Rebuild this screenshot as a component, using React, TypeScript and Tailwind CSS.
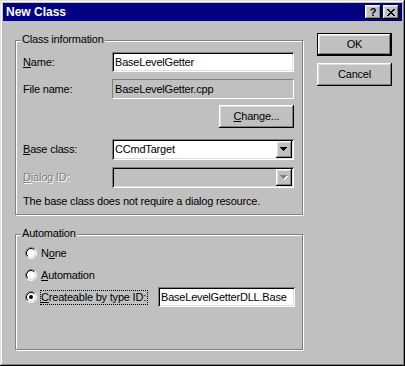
import React from "react";

const raised =
  "shadow-[inset_-1px_-1px_0_#000,inset_1px_1px_0_#fff,inset_-2px_-2px_0_#808080,inset_2px_2px_0_#dfdfdf]";
const sunken =
  "shadow-[inset_1px_1px_0_#808080,inset_-1px_-1px_0_#fff,inset_2px_2px_0_#000,inset_-2px_-2px_0_#dfdfdf]";

const U = ({ children }: { children: React.ReactNode }) => (
  <span className="underline decoration-1 underline-offset-[1px]">{children}</span>
);

const CloseGlyph = () => {
  const rows = ["XX....XX", ".XX..XX.", "..XXXX..", "...XX...", "..XXXX..", ".XX..XX.", "XX....XX"];
  return (
    <svg width="8" height="7" viewBox="0 0 8 7" shapeRendering="crispEdges">
      {rows.map((r, y) =>
        r.split("").map((c, x) => (c === "X" ? <rect key={`${x}-${y}`} x={x} y={y} width="1" height="1" fill="#000" /> : null))
      )}
    </svg>
  );
};

const Arrow = ({ disabled }: { disabled?: boolean }) => (
  <svg width="8" height="5" viewBox="0 0 8 5" shapeRendering="crispEdges">
    {disabled && <polygon points="1,1 8,1 4.5,5" fill="#fff" />}
    <polygon points="0,0 7,0 3.5,4" fill={disabled ? "#808080" : "#000"} />
  </svg>
);

const Radio = ({ checked }: { checked?: boolean }) => (
  <svg width="12" height="12" viewBox="0 0 12 12" className="shrink-0">
    <circle cx="6" cy="6" r="4.5" fill="#fff" />
    <path d="M2.11 9.89 A5.5 5.5 0 0 1 9.89 2.11" stroke="#808080" fill="none" />
    <path d="M9.89 2.11 A5.5 5.5 0 0 1 2.11 9.89" stroke="#fff" fill="none" />
    <path d="M2.82 9.18 A4.5 4.5 0 0 1 9.18 2.82" stroke="#000" fill="none" />
    <path d="M9.18 2.82 A4.5 4.5 0 0 1 2.82 9.18" stroke="#dfdfdf" fill="none" />
    {checked && <circle cx="6" cy="6" r="2" fill="#000" />}
  </svg>
);

const GroupBox = ({ label, className, children }: { label: string; className: string; children: React.ReactNode }) => (
  <div className={`relative border border-[#808080] shadow-[1px_1px_0_#fff,inset_1px_1px_0_#fff] ${className}`}>
    <span className="absolute left-[5px] top-[-8px] bg-[#c0c0c0] px-[1px] leading-[13px]">{label}</span>
    {children}
  </div>
);

const Combo = ({ value, disabled }: { value?: string; disabled?: boolean }) => (
  <div
    className={`flex h-[21px] w-[182px] items-center p-[2px] ${sunken} ${disabled ? "bg-[#c0c0c0]" : "bg-white"}`}
  >
    <span className="flex-1 pl-[1px] leading-[13px]">{value}</span>
    <div className={`flex h-[17px] w-[16px] items-center justify-center bg-[#c0c0c0] ${raised}`}>
      <Arrow disabled={disabled} />
    </div>
  </div>
);

const Button = ({ children, isDefault }: { children: React.ReactNode; isDefault?: boolean }) =>
  isDefault ? (
    <div className="h-[23px] w-[75px] border border-black">
      <div className={`flex h-full w-full items-center justify-center bg-[#c0c0c0] ${raised}`}>{children}</div>
    </div>
  ) : (
    <div className={`flex h-[23px] w-[75px] items-center justify-center bg-[#c0c0c0] ${raised}`}>{children}</div>
  );

export default function App() {
  return (
    <div
      className="flex h-[366px] w-[405px] flex-col bg-[#c0c0c0] p-[3px] font-['Liberation_Sans',Arial,sans-serif] text-[11px] tracking-[-0.2px] text-black shadow-[inset_-1px_-1px_0_#000,inset_1px_1px_0_#dfdfdf,inset_-2px_-2px_0_#808080,inset_2px_2px_0_#fff]"
    >
      {/* title bar */}
      <div className="flex h-[18px] items-center bg-[#000080] pl-[3px] pr-[3px]">
        <span className="flex-1 text-[12px] font-bold tracking-normal text-white">New Class</span>
        <div className={`flex h-[14px] w-[16px] items-center justify-center bg-[#c0c0c0] text-[11px] font-bold leading-none ${raised}`}>
          ?
        </div>
        <div className={`ml-[2px] flex h-[14px] w-[16px] items-center justify-center bg-[#c0c0c0] ${raised}`}>
          <CloseGlyph />
        </div>
      </div>

      <div className="flex pl-[12px]">
        <div className="flex flex-col">
          <GroupBox label="Class information" className="mt-[19px] h-[175px] w-[288px]">
            <div className="flex flex-col pl-[7px]">
              <div className="mt-[11px] flex h-[20px] items-center">
                <span className="w-[89px]">
                  <U>N</U>ame:
                </span>
                <div className={`flex h-[20px] w-[182px] items-center bg-white pl-[3px] ${sunken}`}>BaseLevelGetter</div>
              </div>
              <div className="mt-[7px] flex h-[20px] items-center">
                <span className="w-[89px]">File name:</span>
                <div className="flex h-[20px] w-[182px] items-center border border-b-white border-l-[#808080] border-r-white border-t-[#808080] pl-[2px]">
                  BaseLevelGetter.cpp
                </div>
              </div>
              <div className="ml-[196px] mt-[6px]">
                <Button>
                  <span>
                    <U>C</U>hange...
                  </span>
                </Button>
              </div>
              <div className="mt-[11px] flex items-center">
                <span className="w-[89px]">
                  <U>B</U>ase class:
                </span>
                <Combo value="CCmdTarget" />
              </div>
              <div className="mt-[7px] flex items-center">
                <span className="w-[89px] text-[#808080] [text-shadow:1px_1px_0_#fff]">
                  <U>D</U>ialog ID:
                </span>
                <Combo disabled />
              </div>
              <p className="mt-[7px] leading-[13px]">The base class does not require a dialog resource.</p>
            </div>
          </GroupBox>

          <GroupBox label="Automation" className="mt-[19px] h-[116px] w-[288px]">
            <div className="flex flex-col gap-[2px] pl-[9px] pt-[8px]">
              <div className="flex h-[20px] items-center">
                <Radio />
                <span className="ml-[4px]">
                  N<U>o</U>ne
                </span>
              </div>
              <div className="flex h-[20px] items-center">
                <Radio />
                <span className="ml-[4px]">
                  <U>A</U>utomation
                </span>
              </div>
              <div className="flex h-[20px] items-center">
                <Radio checked />
                <span className="ml-[3px] block h-[15px] w-[108px] whitespace-nowrap border border-dotted border-black leading-[13px]">
                  <U>C</U>reateable by type ID:
                </span>
                <div className={`ml-[10px] flex h-[20px] w-[137px] items-center whitespace-nowrap bg-white pl-[3px] ${sunken}`}>
                  BaseLevelGetterDLL.Base
                </div>
              </div>
            </div>
          </GroupBox>
        </div>

        <div className="ml-[14px] mt-[12px] flex flex-col gap-[7px]">
          <Button isDefault>OK</Button>
          <Button>Cancel</Button>
        </div>
      </div>
    </div>
  );
}
